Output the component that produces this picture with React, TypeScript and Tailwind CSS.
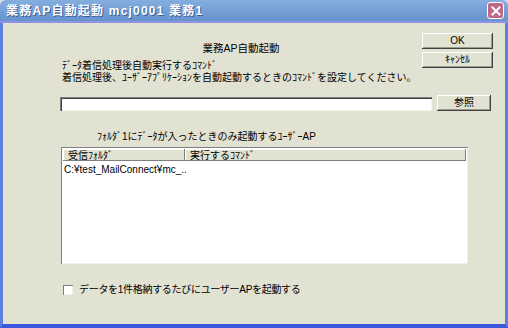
import React from "react";

// Liberation Sans first keeps the line boxes tight; Japanese falls back to Noto CJK
const font = { fontFamily: "'Liberation Sans', 'Noto Sans CJK JP', sans-serif" };

function Btn({ label, className }: { label: string; className: string }) {
  return (
    <div
      className={
        "flex items-center justify-center bg-[#e2e2d3] text-[10px] leading-none text-black shadow-[inset_-1px_-1px_0_#404040,inset_1px_1px_0_#ffffff,inset_-2px_-2px_0_#9a9a90] " +
        className
      }
    >
      {label}
    </div>
  );
}

export default function App() {
  return (
    <div style={font} className="flex h-[328px] w-[508px] flex-col overflow-hidden bg-[#d9d9e8]">
      {/* title bar */}
      <div className="flex h-[23px] shrink-0 items-center rounded-t-[6px] border-b-2 border-[#8f90e6] bg-gradient-to-b from-[#84aede] to-[#6693cd] pl-[6px] pr-[4px]">
        <span className="text-[12px] font-bold leading-none tracking-[1.2px] text-white [text-shadow:1px_1px_0_#3c5a9a]">
          業務AP自動起動 mcj0001 業務1
        </span>
        <div className="ml-auto flex h-[17px] w-[17px] items-center justify-center rounded-[3px] border border-white bg-[#c0678a]">
          <svg width="10" height="10" viewBox="0 0 10 10">
            <path d="M1.5 1.5 L8.5 8.5 M8.5 1.5 L1.5 8.5" stroke="white" strokeWidth="2" strokeLinecap="square" />
          </svg>
        </div>
      </div>

      {/* window body */}
      <div className="flex flex-1 border-x-[3px] border-b-[4px] border-x-[#5b80de] border-b-[#3b58dc] bg-[#e2e2d3]">
        <div className="flex flex-1 flex-col pl-[57px] pt-[10px] text-[10px] leading-[12px] text-black">
          {/* heading + OK/Cancel */}
          <div className="flex">
            <div className="flex flex-1 flex-col">
              <div className="mt-[9px] text-center text-[10.5px] leading-[12px]">業務AP自動起動</div>
              <div className="mt-[6px] pl-[2px]">ﾃﾞｰﾀ着信処理後自動実行するｺﾏﾝﾄﾞ</div>
              <div className="pl-[2px]">着信処理後、ﾕｰｻﾞｰｱﾌﾟﾘｹｰｼｮﾝを自動起動するときのｺﾏﾝﾄﾞを設定してください。</div>
            </div>
            <div className="mr-[12px] flex w-[71px] flex-col gap-[3px]">
              <Btn label="OK" className="h-[16px]" />
              <Btn label="ｷｬﾝｾﾙ" className="h-[16px]" />
            </div>
          </div>

          {/* command input + browse */}
          <div className="mt-[11px] flex items-end">
            <div className="h-[14px] w-[372px] bg-white shadow-[inset_1px_1px_0_#808080,inset_2px_2px_0_#404040,inset_-1px_-1px_0_#f4f4ec]" />
            <Btn label="参照" className="ml-[5px] h-[16px] w-[54px]" />
          </div>

          {/* list label */}
          <div className="mt-[20px] pl-[37px]">ﾌｫﾙﾀﾞ1にﾃﾞｰﾀが入ったときのみ起動するﾕｰｻﾞｰAP</div>

          {/* list */}
          <div className="ml-[1px] mt-[4px] flex h-[117px] w-[407px] flex-col bg-white p-[2px] shadow-[inset_1px_1px_0_#808080,inset_-1px_-1px_0_#f0f0ea]">
            <div className="flex h-[12px] w-[403px] leading-[11px]">
              <div className="flex w-[122px] items-center bg-[#e2e2d3] pl-[5px] shadow-[inset_-1px_-1px_0_#808080,inset_1px_1px_0_#ffffff]">
                受信ﾌｫﾙﾀﾞ
              </div>
              <div className="flex flex-1 items-center bg-[#e2e2d3] pl-[5px] shadow-[inset_-1px_-1px_0_#808080,inset_1px_1px_0_#ffffff]">
                実行するｺﾏﾝﾄﾞ
              </div>
            </div>
            <div className="mt-[3px] pl-[1px]">C:¥test_MailConnect¥mc_..</div>
          </div>

          {/* checkbox */}
          <div className="mt-[20px] flex items-center pl-[3px]">
            <div className="h-[10px] w-[10px] bg-white shadow-[inset_1px_1px_0_#808080,inset_-1px_-1px_0_#f0f0ea]" />
            <span className="ml-[6px] text-[10px] tracking-[-0.3px]">データを1件格納するたびにユーザーAPを起動する</span>
          </div>
        </div>
      </div>
    </div>
  );
}
